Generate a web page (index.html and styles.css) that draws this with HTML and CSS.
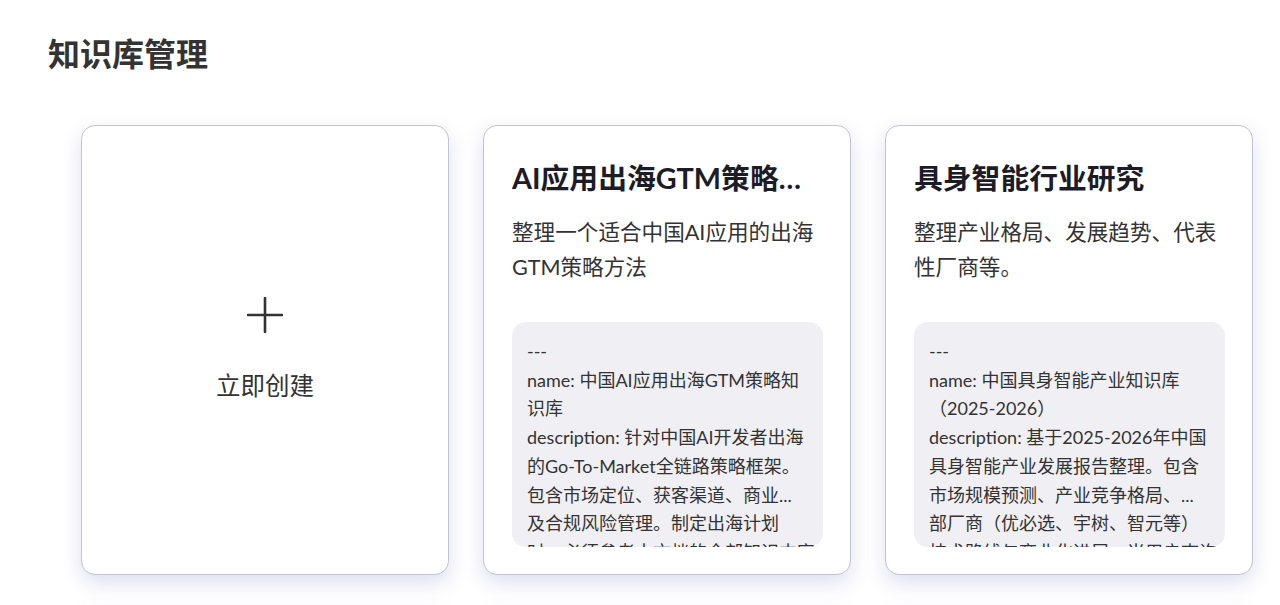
FILE: index.html
```html
<!DOCTYPE html>
<html lang="zh-CN">
<head>
    <meta charset="utf-8">
    <meta name="viewport" content="width=device-width, initial-scale=1.0">
    <title>知识库管理</title>
    <link rel="stylesheet" href="styles.css">
</head>
<body>
    <div class="page">
        <h1 class="page-title">知识库管理</h1>

        <div class="kb-grid">
            <div class="kb-card kb-create">
                <svg class="plus" width="36" height="36" viewBox="0 0 36 36">
                    <path d="M18 1v34M1 18h34" stroke="#333" stroke-width="2.6" stroke-linecap="round" fill="none"/>
                </svg>
                <div class="create-label">立即创建</div>
            </div>

            <div class="kb-card">
                <h2 class="kb-title">AI应用出海GTM策略知识库</h2>
                <p class="kb-desc">整理一个适合中国AI应用的出海<br>GTM策略方法</p>
                <div class="kb-preview">
                    <div class="line">---</div>
                    <div class="line">name: 中国AI应用出海GTM策略知</div>
                    <div class="line">识库</div>
                    <div class="line">description: 针对中国AI开发者出海</div>
                    <div class="line">的Go-To-Market全链路策略框架。</div>
                    <div class="line">包含市场定位、获客渠道、商业...</div>
                    <div class="line">及合规风险管理。制定出海计划</div>
                    <div class="line">时，必须参考本文档的全部知识内容</div>
                </div>
            </div>

            <div class="kb-card">
                <h2 class="kb-title">具身智能行业研究</h2>
                <p class="kb-desc">整理产业格局、发展趋势、代表<br>性厂商等。</p>
                <div class="kb-preview">
                    <div class="line">---</div>
                    <div class="line">name: 中国具身智能产业知识库</div>
                    <div class="line">（2025-2026）</div>
                    <div class="line">description: 基于2025-2026年中国</div>
                    <div class="line">具身智能产业发展报告整理。包含</div>
                    <div class="line">市场规模预测、产业竞争格局、...</div>
                    <div class="line">部厂商（优必选、宇树、智元等）</div>
                    <div class="line">技术路线与商业化进展。当用户查询</div>
                </div>
            </div>

            <div class="kb-card">
                <h2 class="kb-title">大模型应用开发指南</h2>
                <p class="kb-desc">整理大模型应用开发的常用框架<br>与最佳实践。</p>
                <div class="kb-preview">
                    <div class="line">---</div>
                    <div class="line">name: 大模型应用开发知识库</div>
                </div>
            </div>

            <div class="kb-card">
                <h2 class="kb-title">跨境电商运营手册</h2>
                <p class="kb-desc">整理跨境电商选品、投放与物流<br>方案。</p>
                <div class="kb-preview">
                    <div class="line">---</div>
                    <div class="line">name: 跨境电商运营知识库</div>
                </div>
            </div>

            <div class="kb-card">
                <h2 class="kb-title">新能源汽车产业研究</h2>
                <p class="kb-desc">整理产业链结构、技术路线与<br>主要厂商。</p>
                <div class="kb-preview">
                    <div class="line">---</div>
                    <div class="line">name: 新能源汽车产业知识库</div>
                </div>
            </div>
        </div>
    </div>
</body>
</html>
```

FILE: styles.css
```css
body {
    margin: 0;
    background: #fff;
    color: #333;
    font-family: Lato, "Noto Sans CJK SC", sans-serif;
}
.page {
    padding: 30px 27px 40px 48px;
}
.page-title {
    margin: 0;
    font-size: 32px;
    line-height: 48px;
    font-weight: 700;
    color: #333;
}
.kb-grid {
    display: grid;
    grid-template-columns: repeat(3, 368px);
    column-gap: 34px;
    row-gap: 34px;
    margin-top: 47px;
    padding-left: 33px;
}
.kb-card {
    height: 450px;
    box-sizing: border-box;
    display: flex;
    flex-direction: column;
    padding: 32px 27px 27px 28px;
    background: #fff;
    border: 1px solid #c2c2da;
    border-radius: 14px;
    box-shadow: 0 8px 20px rgba(95, 95, 175, 0.2);
    overflow: hidden;
}
.kb-create {
    align-items: center;
    justify-content: center;
    padding: 0;
    cursor: pointer;
}
.plus {
    display: block;
}
.create-label {
    margin-top: 35px;
    font-size: 24.5px;
    line-height: 36px;
    color: #333;
}
.kb-title {
    margin: 0;
    font-size: 28.8px;
    line-height: 40px;
    font-weight: 700;
    color: #1c1c26;
    white-space: nowrap;
    overflow: hidden;
    text-overflow: ellipsis;
}
.kb-desc {
    margin: 17px 0 0;
    height: 69px;
    font-size: 21.6px;
    line-height: 34.5px;
    color: #333;
}
.kb-preview {
    flex: 1;
    margin-top: 38px;
    padding: 15px 15px 0;
    background: #efeff4;
    border-radius: 14px;
    overflow: hidden;
    font-size: 18px;
    line-height: 28.7px;
    color: #333;
}
.kb-preview .line {
    white-space: nowrap;
}
```
